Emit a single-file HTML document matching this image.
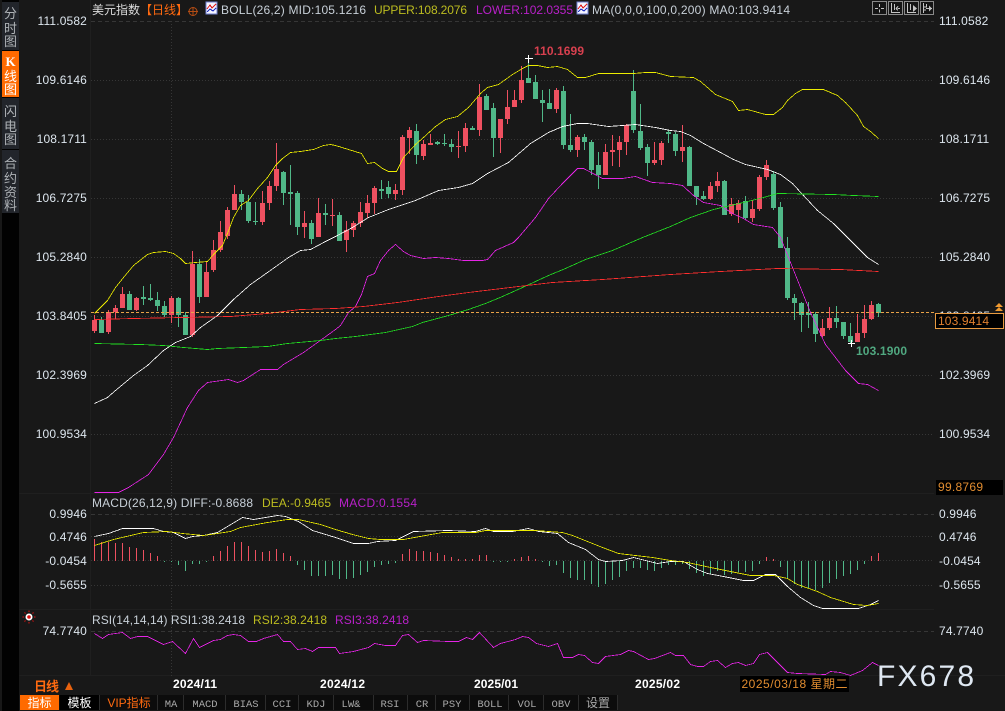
<!DOCTYPE html>
<html><head><meta charset="utf-8"><title>美元指数</title>
<style>
html,body{margin:0;padding:0;background:#181818;overflow:hidden}
svg{display:block}
text{font-family:"Liberation Sans","Noto Sans CJK SC",sans-serif;font-size:12px}
.l{fill:#dde6ee;text-anchor:end;letter-spacing:.15px}
.r{fill:#dde6ee;letter-spacing:.15px}
.s{fill:#aeb2b6;font-size:13px;text-anchor:middle}
.t{fill:#fff;font-weight:bold}
.b{fill:#a8a8a8;font-family:"Liberation Mono",monospace;font-size:10.5px;text-anchor:middle}
.g{fill:none;stroke:#363636;stroke-width:1;stroke-dasharray:1 2;shape-rendering:crispEdges}
.d{fill:none;stroke:#363636;stroke-width:1;stroke-dasharray:4 3;shape-rendering:crispEdges}
.p{fill:none;stroke-width:.8;shape-rendering:crispEdges;stroke-linejoin:round;transform:translate(.5px,.5px)}
</style></head><body>
<svg width="1005" height="711" viewBox="0 0 1005 711" xmlns="http://www.w3.org/2000/svg">
<rect width="1005" height="711" fill="#181818"/>
<!-- sidebar -->
<rect x="2" y="0" width="17" height="711" fill="#020202"/>
<rect x="2" y="2" width="17" height="48" fill="#22252b"/>
<rect x="2" y="51" width="17" height="46" fill="#ff6a00"/>
<rect x="2" y="98" width="17" height="51" fill="#22252b"/>
<rect x="2" y="150" width="17" height="63" fill="#22252b"/>
<text class="s" x="10.5" y="18">分</text><text class="s" x="10.5" y="33">时</text><text class="s" x="10.5" y="46">图</text>
<text class="s" x="10.5" y="66" style="fill:#fff;font-family:'Liberation Serif',serif;font-weight:bold">K</text><text class="s" x="10.5" y="81" style="fill:#fff">线</text><text class="s" x="10.5" y="94" style="fill:#fff">图</text>
<text class="s" x="10.5" y="116">闪</text><text class="s" x="10.5" y="131">电</text><text class="s" x="10.5" y="144">图</text>
<text class="s" x="10.5" y="168">合</text><text class="s" x="10.5" y="183">约</text><text class="s" x="10.5" y="197">资</text><text class="s" x="10.5" y="210">料</text>
<!-- frame lines -->
<path d="M90.5 0V676M19.5 493.5H934M19.5 609.5H934M19.5 675.5H1005" stroke="#1f1f1f" fill="none" shape-rendering="crispEdges"/>
<!-- grid -->
<path class="d" d="M91 21.5H934M91 514.5H934M91 631.5H934"/>
<path class="g" d="M91 80.5H934M91 139.5H934M91 198.5H934M91 257.5H934M91 316.5H934M91 375.5H934M91 434.5H934M91 536.5H934M91 560.5H934M91 585.5H934M171.5 21V676"/>
<!-- wicks -->
<path stroke="#ee5060" stroke-width="1" fill="none" shape-rendering="crispEdges" d="M94.5 315V333M108.5 310V334M115.5 305V319M122.5 287V308M136.5 297V311M171.5 296V323M192.5 251V337M206.5 262V297M213.5 240V272M220.5 221V252M227.5 207V239M234.5 185V210M262.5 191V225M269.5 181V210M276.5 143V191M304.5 211V238M318.5 198V237M332.5 199V226M346.5 221V252M353.5 221V237M360.5 202V227M367.5 195V218M374.5 186V214M395.5 184V200M402.5 135V195M409.5 127V154M423.5 140V160M430.5 134V145M458.5 131V158M465.5 123V152M479.5 84V136M500.5 119V153M507.5 90V124M514.5 90V107M521.5 66V103M556.5 88V113M577.5 135V157M605.5 144V175M612.5 135V166M619.5 136V167M626.5 124V155M654.5 142V165M661.5 141V165M682.5 125V162M710.5 182V200M717.5 172V192M731.5 198V216M738.5 200V223M752.5 200V222M759.5 175V211M766.5 160V180M822.5 319V337M829.5 307V330M857.5 314V342M864.5 305V338M871.5 301V320"/>
<path stroke="#50b888" stroke-width="1" fill="none" shape-rendering="crispEdges" d="M101.5 317V333M129.5 291V310M143.5 286V305M150.5 284V301M157.5 292V311M164.5 301V317M178.5 297V327M185.5 312V335M199.5 259V303M241.5 190V210M248.5 195V223M255.5 202V225M283.5 171V205M290.5 165V225M297.5 191V235M311.5 220V244M325.5 204V225M339.5 212V241M381.5 180V199M388.5 181V198M416.5 124V164M437.5 141V145M444.5 134V146M451.5 139V152M472.5 126V130M486.5 94V110M493.5 103V157M528.5 58V83M535.5 75V99M542.5 90V122M549.5 89V109M563.5 86V149M570.5 114V152M584.5 134V150M591.5 140V175M598.5 152V189M633.5 70V133M640.5 104V150M647.5 144V176M668.5 130V143M675.5 132V156M689.5 146V186M696.5 186V205M703.5 191V200M724.5 180V215M745.5 196V220M773.5 171V210M780.5 202V248M787.5 237V300M794.5 294V320M801.5 302V332M808.5 302V328M815.5 312V342M836.5 306V328M843.5 322V339M850.5 323V343M878.5 303V317"/>
<!-- bodies -->
<path fill="#ee5060" shape-rendering="crispEdges" d="M92 320h5v11h-5zM106 312h5v20h-5zM113 308h5v4h-5zM120 294h5v14h-5zM134 298h5v12h-5zM169 298h5v17h-5zM190 264h5v71h-5zM204 272h5v25h-5zM211 250h5v20h-5zM218 232h5v18h-5zM225 210h5v26h-5zM232 194h5v16h-5zM260 203h5v19h-5zM267 186h5v17h-5zM274 169h5v17h-5zM302 223h5v4h-5zM316 213h5v24h-5zM330 215h5v1h-5zM344 230h5v10h-5zM351 223h5v7h-5zM358 212h5v11h-5zM365 203h5v10h-5zM372 188h5v15h-5zM393 190h5v4h-5zM400 137h5v53h-5zM407 130h5v8h-5zM421 144h5v12h-5zM428 143h5v2h-5zM456 146h5v1h-5zM463 128h5v18h-5zM477 97h5v33h-5zM498 119h5v19h-5zM505 107h5v12h-5zM512 100h5v7h-5zM519 80h5v20h-5zM554 90h5v19h-5zM575 137h5v13h-5zM603 152h5v23h-5zM610 150h5v2h-5zM617 142h5v8h-5zM624 125h5v17h-5zM652 160h5v3h-5zM659 143h5v17h-5zM680 147h5v4h-5zM708 186h5v13h-5zM715 181h5v5h-5zM729 204h5v10h-5zM736 203h5v7h-5zM750 209h5v9h-5zM757 177h5v32h-5zM764 165h5v12h-5zM820 328h5v8h-5zM827 318h5v10h-5zM855 333h5v9h-5zM862 319h5v14h-5zM869 305h5v14h-5z"/>
<path fill="#50b888" shape-rendering="crispEdges" d="M99 320h5v13h-5zM127 294h5v16h-5zM141 297h5v2h-5zM148 298h5v2h-5zM155 300h5v6h-5zM162 306h5v9h-5zM176 298h5v17h-5zM183 315h5v20h-5zM197 264h5v33h-5zM239 194h5v8h-5zM246 202h5v19h-5zM253 221h5v1h-5zM281 172h5v21h-5zM288 192h5v2h-5zM295 193h5v34h-5zM309 223h5v16h-5zM323 213h5v2h-5zM337 215h5v26h-5zM379 189h5v2h-5zM386 187h5v7h-5zM414 131h5v24h-5zM435 142h5v2h-5zM442 143h5v1h-5zM449 144h5v3h-5zM470 128h5v2h-5zM484 96h5v14h-5zM491 108h5v30h-5zM526 78h5v5h-5zM533 82h5v17h-5zM540 100h5v3h-5zM547 103h5v6h-5zM561 91h5v54h-5zM568 145h5v5h-5zM582 137h5v5h-5zM589 142h5v28h-5zM596 165h5v10h-5zM631 91h5v39h-5zM638 131h5v17h-5zM645 147h5v16h-5zM666 132h5v2h-5zM673 134h5v17h-5zM687 147h5v39h-5zM694 186h5v11h-5zM701 196h5v3h-5zM722 181h5v34h-5zM743 201h5v17h-5zM771 174h5v34h-5zM778 207h5v41h-5zM785 248h5v50h-5zM792 298h5v5h-5zM799 303h5v12h-5zM806 313h5v2h-5zM813 314h5v20h-5zM834 318h5v4h-5zM841 322h5v14h-5zM848 336h5v6h-5zM876 304h5v9h-5z"/>
<!-- boll lines -->
<polyline class="p" stroke="#ecec00" points="94,313 107,300 115,287 123,277 133,265 147,254 153,252 165,251 173,253 180,258 185,263 195,262 207,261 213,254 222,245 227,233 233,217 240,205 248,200 257,188 267,177 275,165 282,158 290,152 300,151 313,149 323,145 330,144 335,145 348,149 361,153 367,163 374,162 382,168 388,171 396,171 403,157 415,144 423,137 435,126 445,119 457,116 468,107 480,93 487,87 498,84 512,74 522,68 528,65 537,65 547,67 557,66 567,69 577,77 585,77 598,73 633,73 645,72 655,72 670,76 693,77 700,81 707,87 715,94 732,101 738,110 747,109 765,114 773,114 782,107 787,100 795,93 802,89 823,89 837,95 845,102 857,115 863,126 870,131 878,138"/>
<polyline class="p" stroke="#ffffff" points="94,403 107,397 115,390 133,375 147,365 163,350 175,342 190,336 200,327 217,315 233,299 250,284 267,272 288,257 300,250 310,249 325,241 335,236 352,227 368,217 388,209 415,200 438,190 458,187 472,183 487,173 508,162 530,143 548,132 562,126 577,123 587,123 608,126 635,124 655,127 670,130 680,131 690,135 703,143 720,152 733,159 745,164 767,169 780,174 792,183 803,195 817,210 833,223 847,237 867,257 878,264"/>
<polyline class="p" stroke="#e624e6" points="94,492 118,492 128,487 148,474 163,454 173,437 187,407 198,390 207,382 228,379 237,382 243,380 260,369 277,369 283,364 303,352 317,342 335,329 340,325 348,312 355,306 361,294 367,276 374,273 380,260 388,250 395,244 403,251 410,255 423,258 435,257 448,258 463,260 482,260 487,259 495,250 513,242 518,237 535,217 548,198 562,183 577,168 583,168 602,178 622,178 635,176 652,182 670,183 682,185 693,195 703,202 720,205 732,213 743,218 753,224 772,227 780,237 792,267 810,312 825,344 845,370 858,383 867,384 878,390"/>
<polyline class="p" stroke="#22e022" points="94,343 140,344 163,345 183,347 207,349 217,348 243,347 267,346 287,343 320,340 335,338 355,336 385,332 412,326 422,322 448,315 468,309 485,303 502,296 522,287 548,275 565,268 585,259 612,250 642,237 670,226 690,217 713,209 743,202 763,197 777,193 833,194 853,195 878,196"/>
<polyline class="p" stroke="#ff2e2e" points="94,319 133,318 230,316 267,313 300,309 335,308 363,306 397,302 438,296 468,292 518,286 552,282 602,279 670,274 720,271 777,268 840,269 878,271"/>
<path d="M91 312.5H936" stroke="#eaa348" stroke-dasharray="3 2" fill="none" shape-rendering="crispEdges"/>
<!-- hi lo markers -->
<path d="M525 58.5H533M528.5 55V63M848 343.5H855M851.5 340V347" stroke="#fff" fill="none" shape-rendering="crispEdges"/>
<text x="534" y="55" fill="#d8404f" style="font-weight:bold" textLength="50">110.1699</text>
<text x="856" y="355" fill="#50a880" style="font-weight:bold" textLength="51">103.1900</text>
<!-- axes -->
<text class="l" x="87" y="25">111.0582</text><text class="l" x="87" y="84">109.6146</text><text class="l" x="87" y="143">108.1711</text><text class="l" x="87" y="202">106.7275</text><text class="l" x="87" y="261">105.2840</text><text class="l" x="87" y="320">103.8405</text><text class="l" x="87" y="379">102.3969</text><text class="l" x="87" y="438">100.9534</text>
<text class="l" x="87" y="518">0.9946</text><text class="l" x="87" y="541">0.4746</text><text class="l" x="87" y="565">-0.0454</text><text class="l" x="87" y="589">-0.5655</text><text class="l" x="87" y="635">74.7740</text>
<text class="r" x="939" y="25">111.0582</text><text class="r" x="939" y="84">109.6146</text><text class="r" x="939" y="143">108.1711</text><text class="r" x="939" y="202">106.7275</text><text class="r" x="939" y="261">105.2840</text><text class="r" x="939" y="320">103.8405</text><text class="r" x="939" y="379">102.3969</text><text class="r" x="939" y="438">100.9534</text>
<text class="r" x="939" y="518">0.9946</text><text class="r" x="939" y="541">0.4746</text><text class="r" x="939" y="565">-0.0454</text><text class="r" x="939" y="589">-0.5655</text><text class="r" x="939" y="635">74.7740</text>
<rect x="936" y="480" width="67" height="15" fill="#000"/>
<text x="938" y="491" fill="#e08c30" textLength="45">99.8769</text>
<rect x="935.5" y="313.5" width="68" height="15" fill="#000" stroke="#e89a40"/>
<text x="938" y="325" fill="#e08030" textLength="51">103.9414</text>
<path d="M999 303l4 4h-8zM999 307l4 4h-8z" fill="#f09a30"/>
<!-- header -->
<text x="92" y="14" fill="#dcdcdc">美元指数</text>
<text x="140" y="14" fill="#ff6a10">【日线】</text>
<g fill="none" stroke="#b54d14"><circle cx="193" cy="11.5" r="4"/><path d="M188 11.5H198M193 7V16"/></g>
<g shape-rendering="crispEdges"><rect x="206" y="2" width="11" height="12" fill="#f4f4ff" stroke="#7080d0"/><polyline points="207,9 210,5 212,8 216,4" fill="none" stroke="#e02020"/><polyline points="207,12 210,9 213,11 216,8" fill="none" stroke="#2030c0"/></g>
<text x="221" y="14" fill="#c8d0d8" textLength="145">BOLL(26,2) MID:105.1216</text>
<text x="374" y="14" fill="#bcbc20" textLength="93">UPPER:108.2076</text>
<text x="476" y="14" fill="#b820c8" textLength="97">LOWER:102.0355</text>
<g shape-rendering="crispEdges"><rect x="577" y="2" width="11" height="12" fill="#f4f4ff" stroke="#7080d0"/><polyline points="578,9 581,5 583,8 587,4" fill="none" stroke="#e02020"/><polyline points="578,12 581,9 584,11 587,8" fill="none" stroke="#2030c0"/></g>
<text x="592" y="14" fill="#c8d0d8" textLength="198">MA(0,0,0,100,0,200) MA0:103.9414</text>
<!-- tool buttons -->
<g fill="#151515" stroke="#8a8a8a" shape-rendering="crispEdges"><rect x="872.5" y="1.5" width="14" height="13"/><rect x="888.5" y="1.5" width="14" height="13"/><rect x="904.5" y="1.5" width="14" height="13"/><rect x="920.5" y="1.5" width="13" height="13"/></g>
<g fill="none" stroke="#c4c4c4" shape-rendering="crispEdges"><path d="M879.5 4V7M879.5 9.500V12.500M875 8.500H878M881 8.500H884"/><path d="M891.500 3V12.500H900M894.500 4V10M897.500 8.500H900M896 8.500l2-2M896 8.500l2 2"/><path d="M907.500 3V12.500H916M910.500 4V10"/><path d="M923.500 3V13M926.500 4V7H923.500M926 10H924M926 8.500H932"/></g>
<path d="M913 5l4 3.500-4 3.500z" fill="#c4c4c4"/><path d="M929 5.500l3 3-3 3z" fill="#c4c4c4"/>
<!-- MACD -->
<text x="92" y="507" fill="#c8d0d8" textLength="161">MACD(26,12,9) DIFF:-0.8688</text>
<text x="262" y="507" fill="#bcbc20" textLength="69">DEA:-0.9465</text>
<text x="339" y="507" fill="#b820c8" textLength="78">MACD:0.1554</text>
<path stroke="#ee5060" fill="none" shape-rendering="crispEdges" d="M94.500 539V561M108.500 542V561M115.500 543V561M122.500 543V561M101.500 542V561M129.500 547V561M136.500 548V561M143.500 550V561M150.500 553V561M157.500 556V561M213.500 556V561M220.500 551V561M227.500 546V561M234.500 542V561M241.500 542V561M248.500 546V561M255.500 550V561M262.500 552V561M269.500 551V561M276.500 549V561M283.500 553V561M290.500 556V561M402.500 554V561M409.500 549V561M416.500 551V561M423.500 551V561M430.500 552V561M437.500 553V561M444.500 555V561M451.500 557V561M458.500 559V561M465.500 559V561M472.500 559V561M479.500 555V561M486.500 555V561M514.500 559V561M521.500 557V561M528.500 556V561M535.500 559V561M766.500 557V561M773.500 559V561M871.500 556V561M878.500 553V561"/>
<path stroke="#50b888" fill="none" shape-rendering="crispEdges" d="M164.500 561V562M171.500 561V562M178.500 561V565M185.500 561V571M192.500 561V564M199.500 561V564M206.500 561V562M297.500 561V565M304.500 561V570M311.500 561V576M318.500 561V576M325.500 561V576M332.500 561V575M339.500 561V579M346.500 561V579M353.500 561V578M360.500 561V575M367.500 561V572M374.500 561V567M381.500 561V565M388.500 561V564M395.500 561V563M493.500 561V562M500.500 561V562M507.500 561V562M542.500 561V562M549.500 561V566M556.500 561V565M563.500 561V573M570.500 561V578M577.500 561V580M584.500 561V580M591.500 561V584M598.500 561V587M605.500 561V584M612.500 561V580M619.500 561V577M626.500 561V571M633.500 561V568M640.500 561V568M647.500 561V570M654.500 561V571M661.500 561V568M668.500 561V565M675.500 561V565M682.500 561V564M689.500 561V569M696.500 561V573M703.500 561V576M710.500 561V574M717.500 561V571M724.500 561V575M731.500 561V574M738.500 561V572M745.500 561V572M752.500 561V571M759.500 561V564M780.500 561V567M787.500 561V579M794.500 561V584M801.500 561V588M808.500 561V588M815.500 561V590M822.500 561V588M829.500 561V583M836.500 561V579M843.500 561V576M850.500 561V574M857.500 561V570M864.500 561V564"/>
<polyline class="p" stroke="#ffffff" points="94,536 108,533 122,528 153,528 163,531 173,532 185,538 192,536 203,535 217,532 227,526 242,517 253,519 277,515 285,516 298,521 312,530 335,537 353,543 368,543 377,541 395,540 403,536 413,531 448,530 475,531 485,528 493,531 512,531 528,528 538,531 557,533 568,542 585,549 598,559 605,561 622,560 633,557 645,560 657,563 670,561 683,561 697,569 707,573 723,576 743,580 753,580 765,574 775,574 787,586 800,597 813,605 822,608 858,608 870,604 878,600"/>
<polyline class="p" stroke="#ecec00" points="94,545 113,539 143,532 167,531 182,533 203,535 217,533 230,531 240,527 267,522 287,519 298,519 320,524 335,529 352,534 368,538 380,539 403,539 425,535 442,532 475,532 485,530 535,530 562,532 572,535 602,547 618,553 652,557 670,560 687,562 710,567 750,575 773,575 787,578 797,584 817,591 830,597 853,604 867,605 878,603"/>
<!-- RSI -->
<text x="92" y="624" fill="#c8d0d8" textLength="153">RSI(14,14,14) RSI1:38.2418</text>
<text x="253" y="624" fill="#bcbc20" textLength="74">RSI2:38.2418</text>
<text x="335" y="624" fill="#b820c8" textLength="74">RSI3:38.2418</text>
<polyline class="p" stroke="#e624e6" points="94,633 102,638 108,634 122,632 130,638 137,636 147,636 163,644 172,641 185,653 193,638 199,647 213,640 220,639 227,635 233,634 240,635 248,641 256,641 263,638 277,634 283,641 290,641 297,649 305,648 312,651 318,647 335,647 339,653 353,651 368,647 374,643 385,645 395,645 402,635 408,634 417,642 423,640 448,641 458,641 466,637 472,639 479,632 493,647 500,643 515,639 522,636 528,637 536,643 548,646 557,643 563,657 572,657 578,654 584,655 592,662 598,663 605,656 620,654 628,650 633,651 648,659 654,658 670,652 675,655 683,655 690,664 697,666 703,666 710,661 717,660 725,667 732,663 738,662 745,665 753,663 759,654 767,652 787,672 797,673 825,674 830,671 840,672 850,675 862,670 872,662 878,665"/>
<g><circle cx="29" cy="617" r="3.500" fill="#fff"/><circle cx="29" cy="617" r="1.800" fill="#e01010"/><path d="M29 610.500V612M29 622V623.500M22.500 617H24M34 617H35.500M24.500 612.500l1 1M32.500 620.500l1 1M33.500 612.500l-1 1M25.500 620.500l-1 1" stroke="#e01010" fill="none"/></g>
<!-- time axis -->
<text x="34" y="691" fill="#ff6a10" style="font-size:13px;font-weight:bold" textLength="25">日线</text>
<path d="M69 682l4 8h-8z" fill="#e8620e"/>
<text class="t" x="173" y="688" textLength="44">2024/11</text>
<text class="t" x="320" y="688" textLength="45">2024/12</text>
<text class="t" x="474" y="688" textLength="44">2025/01</text>
<text class="t" x="635" y="688" textLength="45">2025/02</text>
<rect x="740" y="676" width="109" height="16" fill="#000"/>
<text x="741.500" y="688" fill="#e08c30" textLength="106">2025/03/18 星期二</text>
<text x="877" y="686" fill="#dfe8f2" style="font-size:30px" textLength="97">FX678</text>
<!-- bottom tabs -->
<rect x="20" y="695" width="985" height="16" fill="#181818"/>
<rect x="20" y="695" width="597" height="15" fill="#0c0c0c"/>
<rect x="20" y="695" width="39" height="15" fill="#ff6a00"/>
<rect x="60" y="695" width="39" height="15" fill="#000"/>
<path d="M99.500 695V710M157.500 695V710M183.500 695V710M225.500 695V710M265.500 695V710M298.500 695V710M333.500 695V710M373.500 695V710M407.500 695V710M435.500 695V710M469.500 695V710M508.500 695V710M543.500 695V710M578.500 695V710M617.500 695V710" stroke="#2c2c2c" fill="none" shape-rendering="crispEdges"/>
<text x="39.500" y="707" fill="#fff" text-anchor="middle">指标</text>
<text x="79.500" y="707" fill="#fff" text-anchor="middle">模板</text>
<text x="129" y="707" fill="#ff6a10" text-anchor="middle">VIP指标</text>
<text class="b" x="171" y="707">MA</text><text class="b" x="205" y="707">MACD</text><text class="b" x="246" y="707">BIAS</text><text class="b" x="282" y="707">CCI</text><text class="b" x="316" y="707">KDJ</text><text class="b" x="351" y="707">LW&amp;</text><text class="b" x="390" y="707">RSI</text><text class="b" x="422" y="707">CR</text><text class="b" x="452" y="707">PSY</text><text class="b" x="490" y="707">BOLL</text><text class="b" x="527" y="707">VOL</text><text class="b" x="561" y="707">OBV</text>
<text x="598" y="707" fill="#a8a8a8" text-anchor="middle">设置</text>
</svg>
</body></html>
